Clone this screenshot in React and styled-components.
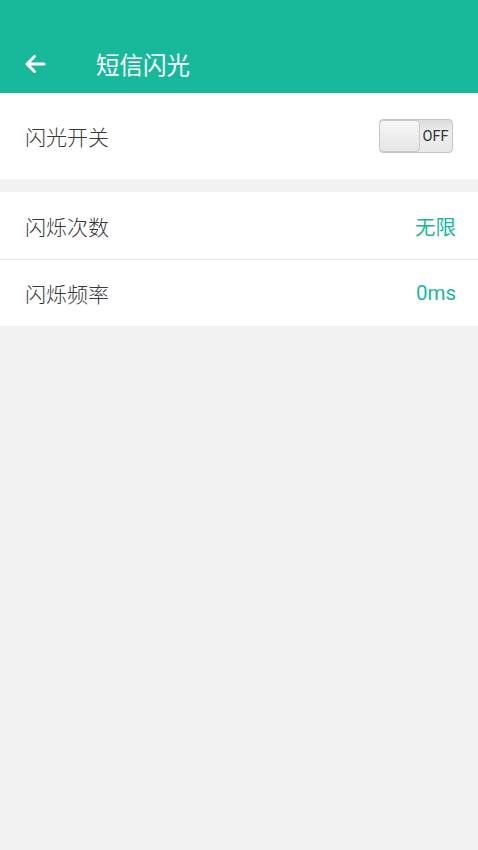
import React, { useState } from 'react'
import styled, { createGlobalStyle } from 'styled-components'

const TEAL = '#18b89d'

const GlobalStyle = createGlobalStyle`
  html, body {
    margin: 0;
    padding: 0;
    background: #f2f2f2;
    font-family: "Noto Sans CJK SC", "Noto Sans", Roboto, sans-serif;
  }
`

const Page = styled.div`
  min-height: 850px;
  background: #f2f2f2;
`

const Header = styled.header`
  height: 93px;
  background: ${TEAL};
  display: flex;
  align-items: flex-end;
  box-sizing: border-box;
  padding: 0 0 13px 22px;
`

const BackButton = styled.button`
  width: 26px;
  height: 26px;
  padding: 0;
  border: none;
  background: transparent;
  display: flex;
  align-items: center;
  justify-content: center;
  color: #fff;
  margin-bottom: 3px;
`

const Title = styled.h1`
  margin: 0 0 0 48px;
  font-size: 23.5px;
  font-weight: 400;
  color: #fff;
  line-height: 32px;
`

const Group = styled.section`
  background: #fff;
  margin-top: ${props => props.gap || 0}px;
`

const Row = styled.div`
  height: ${props => props.height}px;
  display: flex;
  align-items: center;
  justify-content: space-between;
  padding: 0 22px 0 25px;
  box-sizing: border-box;
  border-top: ${props => (props.divider ? '1px solid #e4e4e4' : 'none')};
`

const Label = styled.span`
  font-size: 21px;
  font-weight: 300;
  color: #383838;
`

const Value = styled.span`
  font-size: 20.5px;
  color: ${TEAL};
  font-family: Roboto, "Noto Sans CJK SC", sans-serif;
`

const Toggle = styled.button`
  width: 74px;
  height: 34px;
  padding: 0;
  margin-right: 3px;
  border: 1px solid #c4c4c4;
  border-radius: 4px;
  background: linear-gradient(#dcdcdc, #eeeeee 40%, #e8e8e8);
  display: flex;
  align-items: center;
  box-sizing: border-box;
`

const Knob = styled.span`
  width: 41px;
  height: 32px;
  box-sizing: border-box;
  border: 1px solid #c8c8c8;
  border-radius: 4px;
  margin-left: -1px;
  background: linear-gradient(#f6f6f6, #e6e6e6);
`

const ToggleText = styled.span`
  flex: 1;
  text-align: center;
  font-family: Roboto, sans-serif;
  font-size: 14.5px;
  color: #333;
  padding-right: 1px;
`

const ArrowIcon = () => (
  <svg width="22" height="20" viewBox="0 0 22 20" fill="none">
    <path
      d="M20 10H3M10.5 2.5L3 10l7.5 7.5"
      stroke="#fff"
      strokeWidth="3"
      strokeLinecap="round"
      strokeLinejoin="round"
    />
  </svg>
)

const App = () => {
  const [on, setOn] = useState(false)
  return (
    <Page>
      <GlobalStyle />
      <Header>
        <BackButton aria-label="back">
          <ArrowIcon />
        </BackButton>
        <Title>短信闪光</Title>
      </Header>
      <Group>
        <Row height={86}>
          <Label>闪光开关</Label>
          <Toggle onClick={() => setOn(!on)}>
            <Knob />
            <ToggleText>{on ? 'ON' : 'OFF'}</ToggleText>
          </Toggle>
        </Row>
      </Group>
      <Group gap={13}>
        <Row height={67}>
          <Label>闪烁次数</Label>
          <Value>无限</Value>
        </Row>
        <Row height={67} divider>
          <Label>闪烁频率</Label>
          <Value>0ms</Value>
        </Row>
      </Group>
    </Page>
  )
}

export default App
